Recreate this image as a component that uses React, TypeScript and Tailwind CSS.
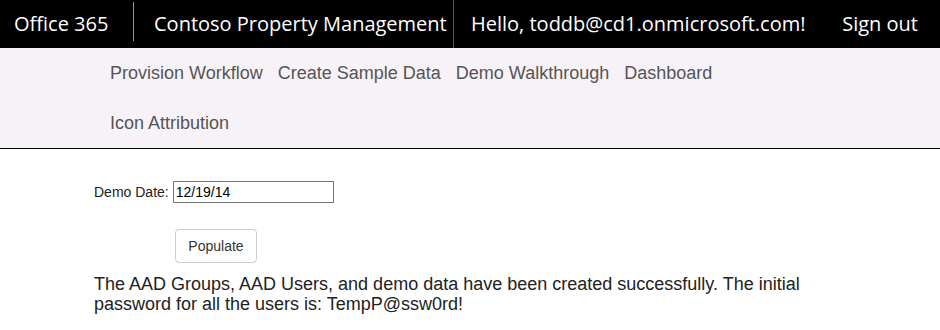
import React from 'react';

const navLinks = ['Provision Workflow', 'Create Sample Data', 'Demo Walkthrough', 'Dashboard', 'Icon Attribution'];

const App: React.FC = () => {
    return (
        <div className="w-[940px] h-[330px] bg-white overflow-hidden font-['Liberation_Sans',Arial,sans-serif]">
            {/* Suite bar */}
            <div className="h-[48px] bg-black text-white flex font-['Open_Sans','Noto_Sans',sans-serif] text-[20px]">
                <div className="w-[133px] pl-[14px] flex items-center">Office 365</div>
                <div className="w-px h-[39px] mt-[2px] bg-[#9a9a9a]" />
                <div className="w-[320px] pl-[20px] flex items-center whitespace-nowrap border-r border-[#555]">
                    Contoso Property Management
                </div>
                <div className="pl-[17px] flex items-center whitespace-nowrap">Hello, toddb@cd1.onmicrosoft.com!</div>
                <div className="ml-auto pr-[22px] flex items-center">Sign out</div>
            </div>

            {/* Nav */}
            <div className="h-[101px] bg-[#f7f2f7] border-b border-black pl-[110px] pr-[200px]">
                <div className="flex flex-wrap gap-x-[15px] text-[18px] text-[#555]">
                    {navLinks.map((link) => (
                        <a key={link} className="h-[50px] flex items-center whitespace-nowrap">
                            {link}
                        </a>
                    ))}
                </div>
            </div>

            {/* Content */}
            <div className="pl-[94px] pt-[32px]">
                <div className="flex items-center gap-[4px] text-[14px] text-[#222]">
                    <label>Demo Date:</label>
                    <input
                        defaultValue="12/19/14"
                        className="w-[161px] h-[22px] border border-[#767676] px-[2px] text-[14px] text-black outline-none"
                    />
                </div>
                <div className="pl-[81px] mt-[26px]">
                    <button className="w-[82px] h-[34px] border border-[#ccc] rounded-[4px] bg-white text-[14px] text-[#333]">
                        Populate
                    </button>
                </div>
                <p className="mt-[11px] text-[18px] leading-[20px] text-[#222] w-[760px]">
                    The AAD Groups, AAD Users, and demo data have been created successfully. The initial password for all the users is: TempP@ssw0rd!
                </p>
            </div>
        </div>
    );
};

export default App;
